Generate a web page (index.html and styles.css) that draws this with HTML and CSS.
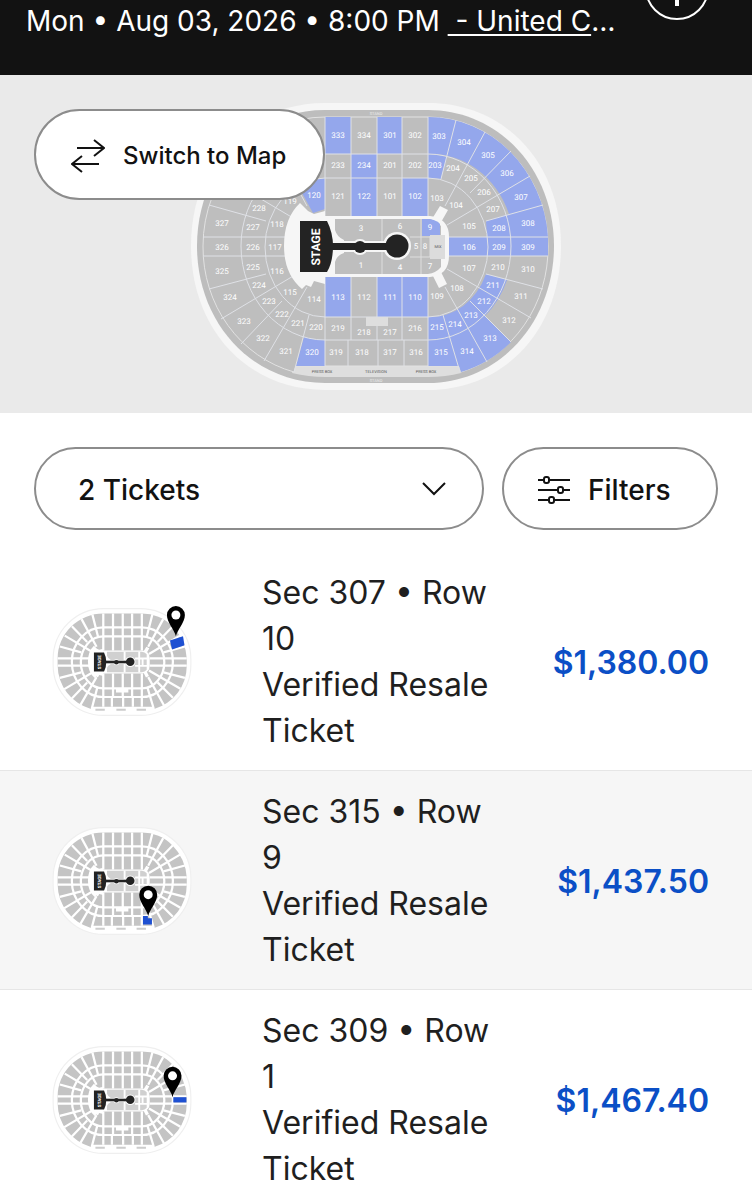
FILE: index.html
```html
<!DOCTYPE html>
<html lang="en">
<head>
<meta charset="utf-8">
<meta name="viewport" content="width=device-width, initial-scale=1">
<title>Tickets</title>
<link rel="stylesheet" href="styles.css">
</head>
<body>
<svg class="defs" aria-hidden="true">
  <defs>
    <g id="bowl">
      <path d="M325 117H428A120 129 0 0 1 548 237V256A120 120 0 0 1 461 372L459 366H294L292 372A122 122 0 0 1 203 256V237A122 120 0 0 1 325 117Z"/>
    </g>
    <g id="dividers" fill="none">
      <path d="M325 154H428A83 92 0 0 1 511 246A83 94 0 0 1 428 340H325A84 94 0 0 1 241 246A84 92 0 0 1 325 154Z"/>
      <path d="M325 178H428A60 69 0 0 1 488 247A60 70 0 0 1 428 317H325A60 70 0 0 1 265 247A60 69 0 0 1 325 178Z"/>
      <path d="M325 117V216M351 117V216M377 117V216M402 117V216M428 117V216"/>
      <path d="M325 277V366M351 277V340M377 277V340M402 277V340M428 277V366M348 340V366M378 340V366M404 340V366"/>
      <path d="M456 120L441 179M485 132L445 206M511 151L470 193M530 176L447 225M543 205L486 221M449 237H548M449 256H548M543 289L486 274M531 318L447 269M511 342L470 301M487 362L445 287M460 372L443 315"/>
      <path d="M296 120L311 179M267 132L307 206M241 151L282 193M222 176L305 225M209 205L266 221M303 237H203M303 256H203M209 289L266 274M221 319L305 269M241 344L282 301M264 361L307 287M294 372L309 315"/>
    </g>
    <g id="floor">
      <path class="floor-white" d="M300 203L308 211L314 214L325 211V216H430Q449 218 449 237V256Q449 275 430 277H325V284L314 281L311 287L306 285L302 289Q284 274 284 246Q284 218 300 203Z"/>
      <path class="floor-white" d="M440 206L448 210L440 224L432 219ZM432 274L440 270L447 284L439 288Z"/>
      <path class="floor-seat" d="M335 219H428Q436 220 441 226V267Q436 273 428 274H335V262Q337 255 344 253V240Q337 237 335 230Z"/>
      <path class="floor-line" d="M382 219V274M421 219V274M410 237H443M410 257H443M430 236V257"/>
    </g>
    <g id="stage">
      <g class="stage-halo">
        <path d="M328 241H397V252H328Z"/>
        <circle cx="360" cy="247" r="8"/>
        <circle cx="397" cy="246" r="14"/>
      </g>
      <path d="M300 221H327Q333 233 333 246Q333 262 327 272H300Z"/>
      <path d="M330 243H395V250H330Z"/>
      <circle cx="360" cy="247" r="6"/>
      <circle cx="397" cy="246" r="11.500"/>
      <text class="stage-text" transform="translate(320 247) rotate(-90)">STAGE</text>
    </g>
    <g id="mini">
      <rect class="mini-shell" x="191" y="104" width="368" height="285" rx="135"/>
      <use href="#bowl" class="mini-bowl"/>
      <use href="#dividers" class="mini-lines"/>
      <path class="mini-box" d="M359 316H392V328H359Z"/>
      <g class="mini-floor"><use href="#floor"/></g>
      <use href="#stage" class="mini-stage"/>
      <path class="mini-press" d="M304 374H329M360 374H385M414 374H439"/>
    </g>
    <g id="pin">
      <path d="M0 0C-4 -18 -24 -37 -24 -57A24 24 0 0 1 24 -57C24 -37 4 -18 0 0Z"/>
      <circle cy="-57" r="12" fill="#fff"/>
    </g>
  </defs>
</svg>

<header class="event-bar">
  <p class="event-when">Mon • Aug 03, 2026 • 8:00 PM <a href="#venue">&nbsp;- United C</a>…</p>
  <button class="info-button" type="button" aria-label="More information">
    <svg viewBox="0 0 64 64"><circle cx="32" cy="32" r="31"/><path d="M32 15V50"/></svg>
  </button>
</header>

<main>
  <section class="map" aria-label="Seat map">
    <svg class="seat-map" viewBox="0 75 752 338" role="img" aria-label="Arena sections">
      <path fill="#f6f6f6" d="M325 103H428C506 103 561 164 561 246S506 390 428 390H325C247 390 191 329 191 246S247 103 325 103Z"/>
      <path fill="#bdbdbd" d="M325 110H428C500 110 554 171 554 246S500 383 428 383H325C252 383 197 323 197 246S252 110 325 110Z"/>
      <path fill="#dedede" d="M294 366H459L461 373Q446 377 428 377H325Q309 377 292 373Z"/>
      <path fill="#bebebe" stroke="#e2e2e2" d="M325 117H428A120 129 0 0 1 548 246A120 129 0 0 1 461 372L459 366H296L294 372A122 129 0 0 1 203 246A122 129 0 0 1 325 117Z"/>
      <g fill="#94a7ec">
        <path d="M428 117A120 129 0 0 1 548 237V256H449V237H487L486 221L509 214A83 92 0 0 0 428 154Z"/>
        <path d="M428 154Q438 154 447 157L441 179Q434 178 428 178Z"/>
        <path d="M486 274L507 280A83 93 0 0 1 485 316L511 342A120 129 0 0 1 461 372L459 366H428V317A60 70 0 0 0 486 274Z"/>
        <path d="M325 117H351V154H325ZM377 117H402V154H377ZM351 154H377V216H351ZM402 178H428V216H402Z"/>
        <path d="M325 178L306 181L302 193L313 213L325 209Z"/>
        <path d="M325 277H351V317H325ZM377 277H428V317H377Z"/>
        <path d="M304 337Q314 340 325 340V366H296Z"/>
      </g>
      <use href="#dividers" stroke="#dfe1e6" stroke-width="1"/>
      <path fill="#dedede" d="M366 317H388V326H366Z"/>
      <g class="main-floor"><use href="#floor"/></g>
      <path fill="#94a7ec" d="M422 219H430Q438 221 440 224V236H422Z"/>
      <path fill="#dcdcdc" d="M430 235H445V259H430Z"/>
      <use href="#stage" class="main-stage"/>
      <g class="labels">
        <text x="338" y="138">333</text><text x="364" y="138">334</text><text x="390" y="138">301</text><text x="415" y="138">302</text><text x="439" y="139">303</text><text x="464" y="145">304</text><text x="488" y="158">305</text><text x="507" y="176">306</text><text x="521" y="200">307</text><text x="528" y="226">308</text><text x="528" y="250">309</text><text x="528" y="272">310</text><text x="521" y="299">311</text><text x="509" y="323">312</text><text x="490" y="341">313</text><text x="467" y="354">314</text><text x="441" y="355">315</text><text x="416" y="355">316</text><text x="390" y="355">317</text><text x="362" y="355">318</text><text x="336" y="355">319</text><text x="312" y="355">320</text><text x="286" y="354">321</text><text x="263" y="341">322</text><text x="244" y="324">323</text><text x="230" y="300">324</text><text x="222" y="274">325</text><text x="222" y="250">326</text><text x="222" y="226">327</text>
        <text x="338" y="168">233</text><text x="364" y="168">234</text><text x="390" y="168">201</text><text x="415" y="168">202</text><text x="435" y="168">203</text><text x="453" y="171">204</text><text x="471" y="181">205</text><text x="484" y="195">206</text><text x="493" y="212">207</text><text x="499" y="231">208</text><text x="499" y="250">209</text><text x="498" y="270">210</text><text x="493" y="288">211</text><text x="484" y="304">212</text><text x="471" y="318">213</text><text x="455" y="327">214</text><text x="437" y="330">215</text><text x="415" y="331">216</text><text x="390" y="335">217</text><text x="364" y="335">218</text><text x="338" y="331">219</text><text x="316" y="330">220</text><text x="298" y="326">221</text><text x="282" y="317">222</text><text x="269" y="304">223</text><text x="259" y="288">224</text><text x="253" y="270">225</text><text x="253" y="250">226</text><text x="253" y="230">227</text><text x="259" y="211">228</text>
        <text x="390" y="199">101</text><text x="415" y="199">102</text><text x="437" y="201">103</text><text x="456" y="208">104</text><text x="469" y="229">105</text><text x="469" y="250">106</text><text x="469" y="271">107</text><text x="457" y="291">108</text><text x="437" y="299">109</text><text x="415" y="300">110</text><text x="390" y="300">111</text><text x="364" y="300">112</text><text x="338" y="300">113</text><text x="314" y="302">114</text><text x="290" y="295">115</text><text x="277" y="274">116</text><text x="275" y="250">117</text><text x="277" y="227">118</text><text x="290" y="204">119</text><text x="314" y="198">120</text><text x="338" y="199">121</text><text x="364" y="199">122</text>
        <text x="361" y="231">3</text><text x="400" y="229">6</text><text x="430" y="230">9</text><text x="416" y="249">5</text><text x="425" y="249">8</text><text x="361" y="268">1</text><text x="400" y="270">4</text><text x="430" y="269">7</text>
      </g>
      <g class="notes">
        <text x="376" y="115" fill="#eee">STAND</text><text x="376" y="382" fill="#eee">STAND</text>
        <text x="322" y="373">PRESS BOX</text><text x="376" y="373">TELEVISION</text><text x="426" y="373">PRESS BOX</text><text x="438" y="248">MIX</text>
      </g>
    </svg>
    <button class="pill switch" type="button">
      <svg width="34" height="34" viewBox="0 0 34 34"><path d="M6 9H32M23 1L33 9L23 17M28 25H2M11 17L1 25L11 33"/></svg>
      Switch to Map
    </button>
  </section>

  <form class="controls">
    <div class="quantity">
      <select class="pill" aria-label="Number of tickets"><option>2 Tickets</option></select>
      <svg class="chevron" viewBox="0 0 24 14"><path d="M1 1L12 12L23 1"/></svg>
    </div>
    <button class="pill filters" type="button">
      <svg width="32" height="28" viewBox="0 0 32 28"><path d="M0 4H6M11 4H32M0 14H20M25 14H32M0 24H11M16 24H32"/><rect x="6" y="1" width="5" height="6" rx="2"/><rect x="20" y="11" width="5" height="6" rx="2"/><rect x="11" y="21" width="5" height="6" rx="2"/></svg>
      Filters
    </button>
  </form>

  <ul class="listings">
    <li class="listing">
      <svg class="thumb" viewBox="188 97 374 299" aria-hidden="true"><use href="#mini"/><path class="spot" d="M503 189L538 178L542 202L509 213Z"/><use href="#pin" x="519" y="178"/></svg>
      <p class="seat">Sec 307 • Row 10<br>Verified Resale Ticket</p>
      <strong class="price">$1,380.00</strong>
    </li>
    <li class="listing shaded">
      <svg class="thumb" viewBox="188 97 374 299" aria-hidden="true"><use href="#mini"/><path class="spot" d="M431 340H444V346H455V363H431Z"/><use href="#pin" x="445" y="340"/></svg>
      <p class="seat">Sec 315 • Row 9<br>Verified Resale Ticket</p>
      <strong class="price">$1,437.50</strong>
    </li>
    <li class="listing">
      <svg class="thumb" viewBox="188 97 374 299" aria-hidden="true"><use href="#mini"/><path class="spot" d="M512 239H547V253H512Z"/><use href="#pin" x="510" y="239"/></svg>
      <p class="seat">Sec 309 • Row 1<br>Verified Resale Ticket</p>
      <strong class="price">$1,467.40</strong>
    </li>
  </ul>
</main>
</body>
</html>
```
FILE: styles.css
```css
* { box-sizing: border-box; }

body {
  margin: 0;
  background: #fff;
  color: #1f1f1f;
  font-family: Inter, Lato, sans-serif;
}

button, select { font: inherit; }
p { margin: 0; }
.defs { position: absolute; width: 0; height: 0; }

.event-bar {
  display: flex;
  align-items: flex-start;
  justify-content: space-between;
  gap: 8px;
  height: 75px;
  padding: 0 43px 0 26px;
  overflow: hidden;
  background: #121212;
  color: #fff;
}
.event-when {
  flex: 1;
  min-width: 0;
  white-space: nowrap;
  font-size: 28px;
  line-height: 42px;
}
.event-when a { color: inherit; text-decoration-thickness: 2px; text-underline-offset: 3px; }
.info-button {
  flex: none;
  width: 64px;
  height: 64px;
  margin-top: -44px;
  padding: 0;
  border: 0;
  background: none;
}
.info-button svg { display: block; fill: none; stroke: #fff; stroke-width: 2; }
.info-button path { stroke-width: 4; }

.map { position: relative; background: #eaeaea; }
.seat-map { display: block; width: 100%; }
.main-floor { --white: #f6f6f6; --seat: #bebebe; --line: #dedede; --line-width: 1px; }
.floor-white { fill: var(--white); }
.floor-seat { fill: var(--seat); }
.floor-line { fill: none; stroke: var(--line); stroke-width: var(--line-width); }
.main-stage { fill: #232323; --halo: #f6f6f6; }
.stage-halo { fill: var(--halo); }
.stage-text { fill: #fff; font: 700 12px Roboto, sans-serif; text-anchor: middle; text-rendering: geometricPrecision; }
.labels { fill: #fff; font: 8px Roboto, sans-serif; text-anchor: middle; text-rendering: geometricPrecision; }
.notes { fill: #555; font: 4px Roboto, sans-serif; text-anchor: middle; text-rendering: geometricPrecision; }

.pill {
  border: 2px solid #8c8c8c;
  border-radius: 46px;
  background: #fff;
  color: #121212;
  font-weight: 500;
}
.pill svg, .chevron { fill: none; stroke: #121212; stroke-width: 2; }
.switch {
  position: absolute;
  top: 34px;
  left: 34px;
  display: flex;
  align-items: center;
  gap: 18px;
  height: 91px;
  padding: 2px 37px 0 35px;
  font-size: 24px;
}

.controls { display: flex; gap: 18px; padding: 34px 34px 22px; }
.quantity { position: relative; flex: 1; }
.quantity select {
  appearance: none;
  width: 100%;
  height: 83px;
  padding: 2px 80px 0 42px;
  font-size: 28px;
}
.chevron { position: absolute; top: 35px; right: 38px; width: 24px; height: 14px; pointer-events: none; }
.filters {
  display: flex;
  align-items: center;
  gap: 18px;
  width: 216px;
  height: 83px;
  padding: 2px 0 0 34px;
  font-size: 28px;
}

.listings { margin: 0; padding: 0; list-style: none; }
.listing {
  display: grid;
  grid-template-columns: 140px minmax(0, 240px) 1fr;
  column-gap: 70px;
  align-items: center;
  padding: 18px 43px 16px 52px;
  border-bottom: 1px solid #e6e6e6;
}
.listing:last-child { border-bottom: 0; padding-bottom: 8px; }
.shaded { background: #f6f6f6; }
.thumb { display: block; width: 140px; height: 112px; overflow: visible; }
.seat { font-size: 32px; line-height: 46px; }
.price { justify-self: end; margin-left: -70px; color: #0b4fc6; font-size: 32px; font-weight: 600; }

.mini-shell { fill: #fff; stroke: #efefef; stroke-width: 3; }
.mini-bowl { fill: #c4c4c4; }
.mini-lines { stroke: #fff; stroke-width: 6; }
.mini-box { fill: #fff; }
.mini-floor { --white: #fff; --seat: #d0d0d0; --line: #fff; --line-width: 5px; }
.mini-stage { fill: #232323; --halo: #fff; }
.mini-press { stroke: #ccc; stroke-width: 5; }
.spot { fill: #1e50d2; }
```
